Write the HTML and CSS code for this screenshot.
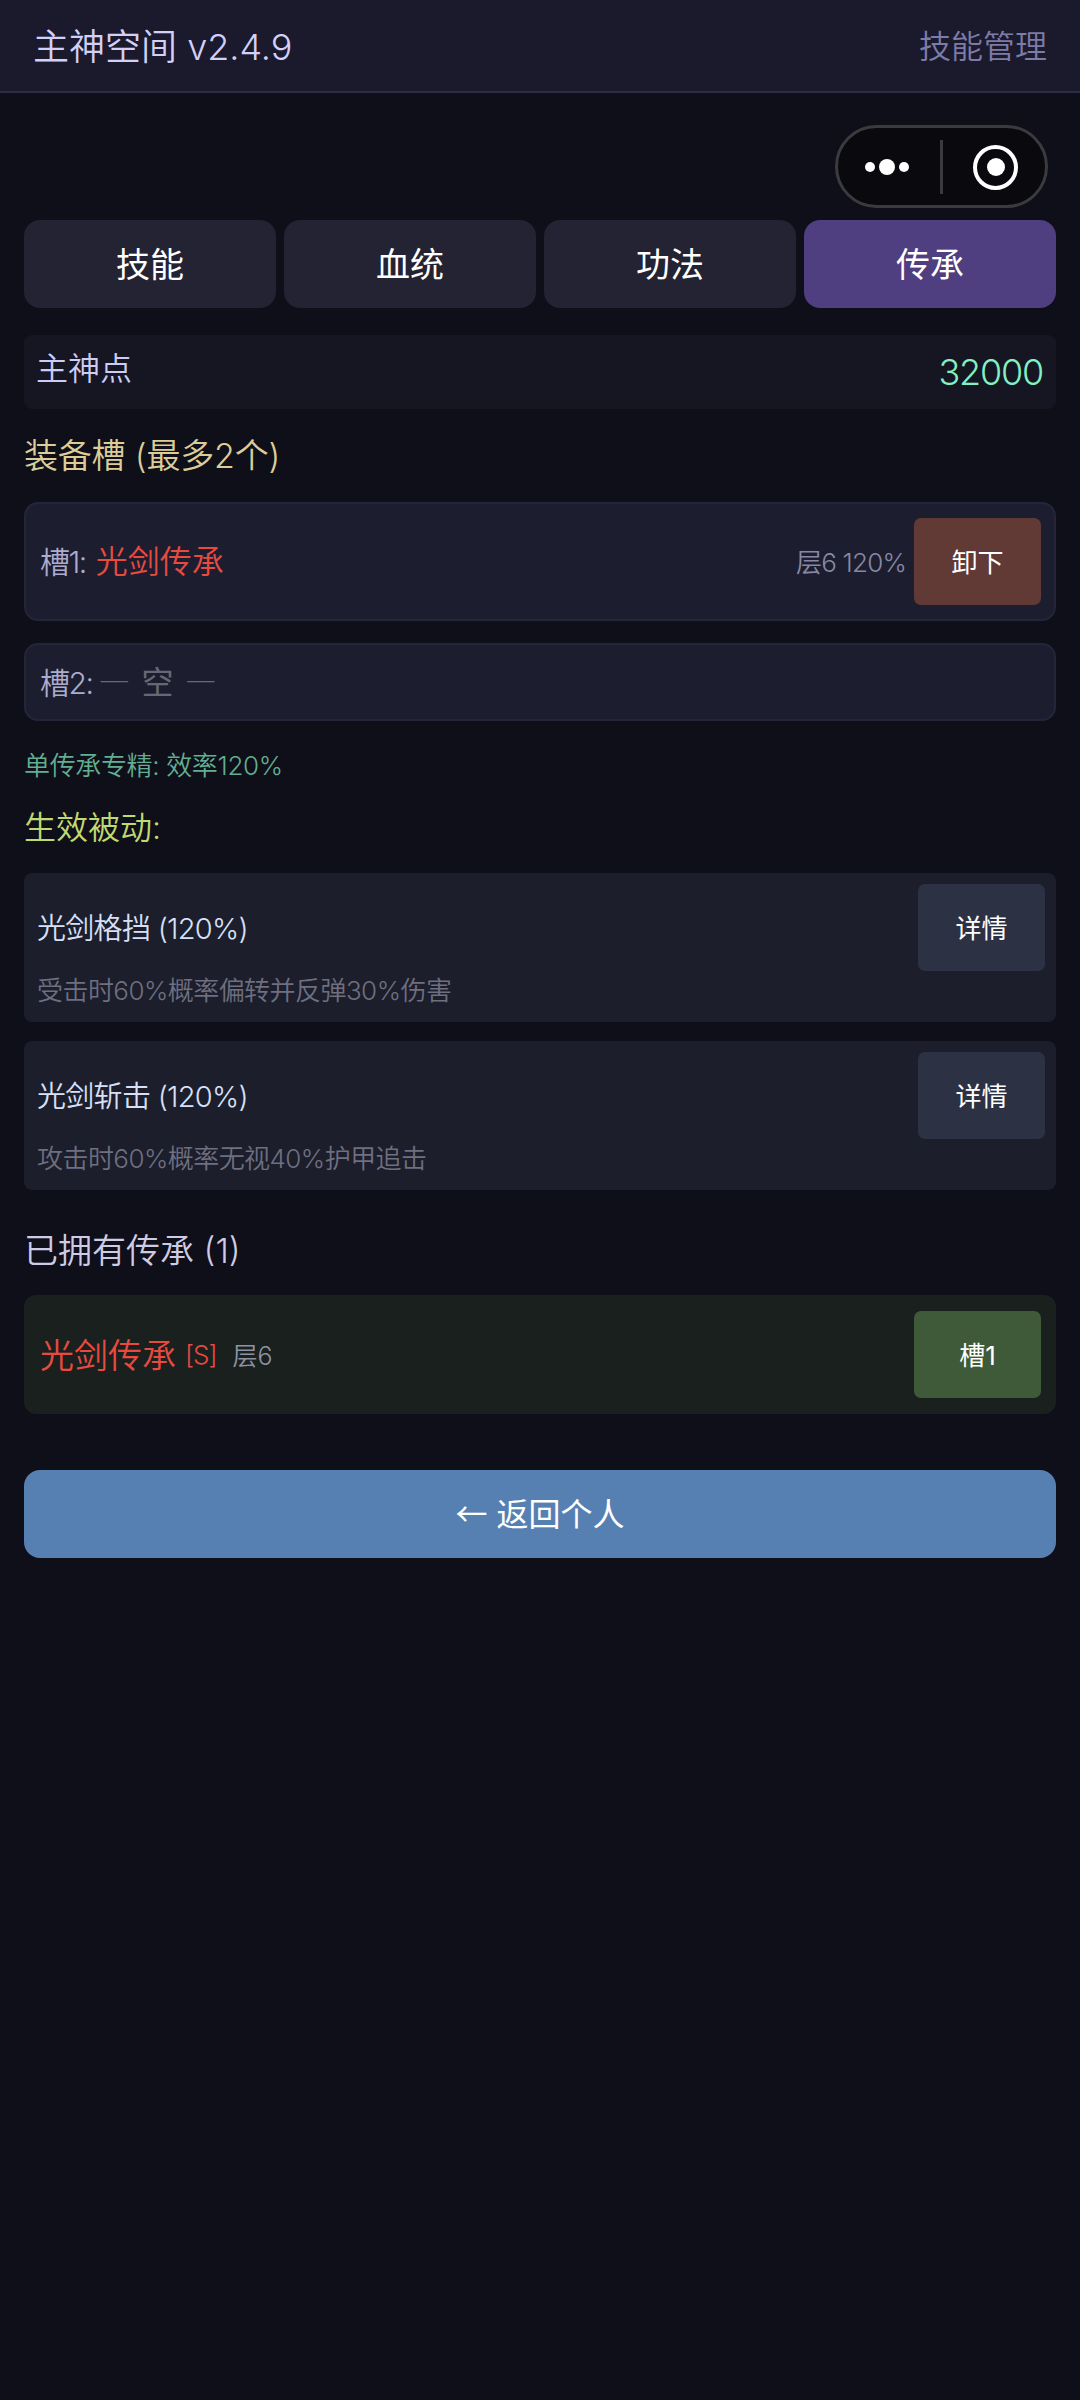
FILE: index.html
```html
<!DOCTYPE html>
<html lang="zh">
<head>
<meta charset="utf-8">
<title>主神空间</title>
<link rel="stylesheet" href="styles.css">
</head>
<body>
<header class="topbar">
  <span class="topbar-title">主神空间 v2.4.9</span>
  <span class="topbar-sub">技能管理</span>
</header>
<div class="capsule">
  <div class="capsule-dots"><i class="dot"></i><i class="dot dot-big"></i><i class="dot"></i></div>
  <i class="capsule-line"></i>
  <div class="capsule-ring"><i class="ring-core"></i></div>
</div>
<main class="page">
  <nav class="tabs">
    <div class="tab">技能</div>
    <div class="tab">血统</div>
    <div class="tab">功法</div>
    <div class="tab tab-active">传承</div>
  </nav>
  <section class="points">
    <span class="points-label">主神点</span>
    <span class="points-value">32000</span>
  </section>
  <h2 class="heading heading-gold">装备槽 (最多2个)</h2>
  <section class="slot slot-full">
    <span class="slot-label">槽1: <span class="slot-name">光剑传承</span></span>
    <span class="slot-info">层6 120%</span>
    <button class="btn btn-remove">卸下</button>
  </section>
  <section class="slot slot-empty">
    <span class="slot-label">槽2: <span class="slot-none">— 空 —</span></span>
  </section>
  <p class="note">单传承专精: 效率120%</p>
  <h2 class="heading heading-lime">生效被动:</h2>
  <section class="passive">
    <div class="passive-top">
      <span class="passive-name">光剑格挡 (120%)</span>
      <button class="btn btn-detail">详情</button>
    </div>
    <p class="passive-desc">受击时60%概率偏转并反弹30%伤害</p>
  </section>
  <section class="passive">
    <div class="passive-top">
      <span class="passive-name">光剑斩击 (120%)</span>
      <button class="btn btn-detail">详情</button>
    </div>
    <p class="passive-desc">攻击时60%概率无视40%护甲追击</p>
  </section>
  <h2 class="heading heading-pale">已拥有传承 (1)</h2>
  <section class="owned">
    <span class="owned-name">光剑传承</span>
    <span class="owned-rank">[S]</span>
    <span class="owned-level">层6</span>
    <button class="btn btn-equip">槽1</button>
  </section>
  <button class="back"><span class="back-arrow">←</span> 返回个人</button>
</main>
</body>
</html>
```
FILE: styles.css
```css
* { box-sizing: border-box; }
html, body { margin: 0; padding: 0; }
body {
  width: 1080px;
  min-height: 2400px;
  background: #0e0f18;
  font-family: "Inter", "Noto Sans CJK SC", sans-serif;
  font-weight: 350;
  position: relative;
  color: #fff;
}
p, h2 { margin: 0; font-weight: 350; }
.topbar {
  height: 93px;
  background: #1a1a2c;
  border-bottom: 2px solid #2e2c46;
  display: flex;
  justify-content: space-between;
  align-items: center;
  padding: 0 33px 3px 33px;
}
.topbar-title { font-size: 36px; color: #d2d0f8; }
.topbar-sub { font-size: 32px; color: #7f7ba8; }
.capsule {
  position: absolute;
  top: 125px;
  left: 835px;
  width: 213px;
  height: 83px;
  border: 3px solid #3b3b3f;
  border-radius: 42px;
  background: #09090e;
  display: flex;
  align-items: center;
  padding-top: 1px;
}
.capsule-dots { width: 98px; display: flex; justify-content: center; align-items: center; gap: 4px; margin-right: 5px; }
.dot { display: block; width: 10px; height: 10px; border-radius: 50%; background: #fff; }
.dot-big { width: 16px; height: 16px; }
.capsule-line { display: block; width: 3px; height: 54px; background: #3b3b3f; margin-left: -1px; }
.capsule-ring {
  margin-left: 30px;
  width: 45px;
  height: 45px;
  border: 4px solid #fff;
  border-radius: 50%;
  display: flex;
  align-items: center;
  justify-content: center;
}
.ring-core { display: block; width: 18px; height: 18px; border-radius: 50%; background: #fff; }
.page { padding: 127px 24px 0; display: flex; flex-direction: column; }
.tabs { display: flex; gap: 8px; }
.tab {
  flex: 1;
  height: 88px;
  border-radius: 16px;
  background: #232333;
  font-size: 34px;
  font-weight: 400;
  display: flex;
  align-items: center;
  justify-content: center;
  padding-bottom: 3px;
}
.tab-active { background: #4f3e80; }
.points {
  margin-top: 27px;
  height: 74px;
  background: #161622;
  border-radius: 8px;
  display: flex;
  justify-content: space-between;
  padding: 0 13px 0 12px;
}
.points-label { font-size: 32px; line-height: 46px; margin-top: 11px; color: #cdccf6; }
.points-value { font-size: 36px; line-height: 50px; margin-top: 12px; color: #82f0c4; letter-spacing: -1.2px; }
.heading { font-size: 34px; line-height: 48px; }
.heading-gold { margin-top: 23px; color: #dccd98; letter-spacing: -0.2px; }
.heading-lime { margin-top: 18px; color: #c0da72; font-size: 32px; }
.heading-pale { margin-top: 37px; color: #cdcce4; }
.slot {
  background: #1c1e30;
  border: 2px solid #242539;
  border-radius: 14px;
  display: flex;
  align-items: center;
  padding: 0 13px 0 14px;
}
.slot-full { margin-top: 22px; height: 119px; }
.slot-empty { margin-top: 22px; height: 78px; }
.slot-label { font-size: 30px; color: #adaccf; flex: 1; padding-bottom: 4px; letter-spacing: -1.5px; }
.slot-full .slot-label { padding-bottom: 6px; }
.slot-name { font-size: 32px; color: #e84a40; letter-spacing: 0; margin-left: 3px; }
.slot-none {
  font-size: 32px;
  font-weight: 400;
  color: #686874;
  font-family: "Noto Sans CJK SC", sans-serif;
  letter-spacing: 0;
  word-spacing: 4px;
  margin-left: -1px;
}
.slot-info { font-size: 26px; color: #8888a4; margin-right: 8px; padding-bottom: 3px; letter-spacing: -0.8px; }
.btn {
  font-family: inherit;
  font-weight: 400;
  font-size: 26px;
  color: #fff;
  border: 0;
  padding: 0 0 2px;
  width: 127px;
  height: 87px;
  border-radius: 7px;
}
.btn-remove { background: #613a36; }
.btn-equip { background: #3e5a38; }
.btn-detail { background: #2c3244; }
.note { margin-top: 25px; font-size: 26px; line-height: 40px; color: #63ad92; letter-spacing: -0.35px; }
.passive {
  background: #1c1e2c;
  border-radius: 8px;
  height: 149px;
  margin-top: 12px;
  padding: 11px 11px 0 13px;
}
.heading-lime + .passive { margin-top: 21px; }
.passive + .passive { margin-top: 19px; }
.passive-top { display: flex; justify-content: space-between; align-items: center; }
.passive-name { font-size: 29px; color: #d8e0f8; letter-spacing: -0.7px; padding-bottom: 4px; }
.passive-desc { margin-top: 0; font-size: 26px; line-height: 40px; color: #6e6f80; letter-spacing: -0.55px; }
.owned {
  margin-top: 20px;
  height: 119px;
  background: #1a201e;
  border-radius: 12px;
  display: flex;
  align-items: center;
  padding: 0 15px 0 16px;
}
.owned-name { font-size: 34px; color: #e84a40; padding-bottom: 2px; }
.owned-rank { font-size: 26px; color: #e84a40; margin-left: 9px; letter-spacing: -1px; }
.owned-level { font-size: 25px; color: #8e93a4; margin-left: 16px; flex: 1; padding-bottom: 1px; }
.back {
  margin-top: 56px;
  height: 88px;
  border: 0;
  border-radius: 16px;
  background: #5780b2;
  color: #fff;
  font-family: inherit;
  font-weight: 400;
  font-size: 32px;
  padding: 0 0 4px;
}
.back-arrow { font-family: "Noto Sans CJK SC", sans-serif; }
```
